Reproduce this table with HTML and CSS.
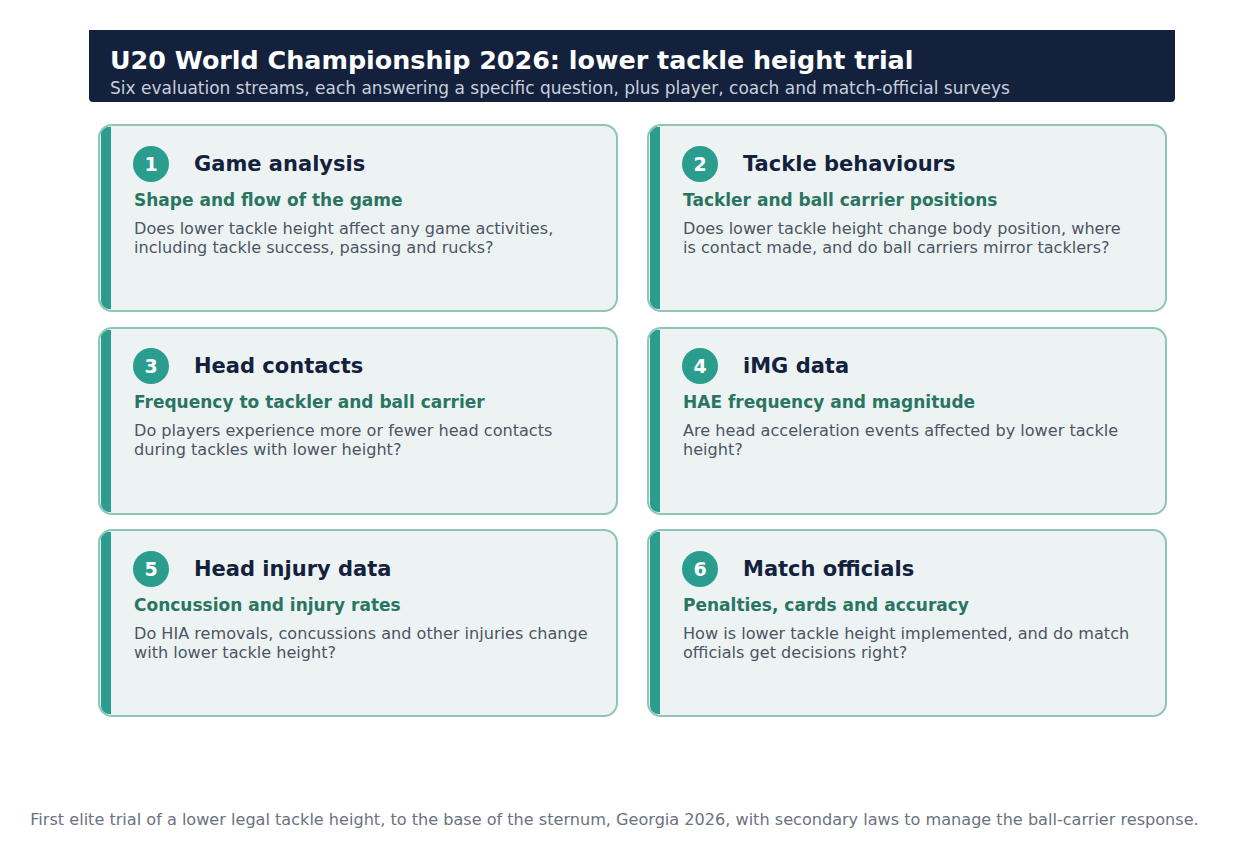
FILE: index.html
```html
<!DOCTYPE html>
<html lang="en">
<head>
<meta charset="utf-8">
<title>U20 World Championship 2026: lower tackle height trial</title>
<link rel="stylesheet" href="styles.css">
</head>
<body>
<div class="page">
  <header class="banner">
    <h1 class="banner-title">U20 World Championship 2026: lower tackle height trial</h1>
    <p class="banner-sub">Six evaluation streams, each answering a specific question, plus player, coach and match-official surveys</p>
  </header>

  <main class="grid">
    <section class="card">
      <div class="card-bar"></div>
      <div class="card-body">
        <div class="card-head"><span class="num">1</span><h2 class="card-title">Game analysis</h2></div>
        <h3 class="card-sub">Shape and flow of the game</h3>
        <p class="card-text">Does lower tackle height affect any game activities,<br>including tackle success, passing and rucks?</p>
      </div>
    </section>
    <section class="card">
      <div class="card-bar"></div>
      <div class="card-body">
        <div class="card-head"><span class="num">2</span><h2 class="card-title">Tackle behaviours</h2></div>
        <h3 class="card-sub">Tackler and ball carrier positions</h3>
        <p class="card-text">Does lower tackle height change body position, where<br>is contact made, and do ball carriers mirror tacklers?</p>
      </div>
    </section>
    <section class="card">
      <div class="card-bar"></div>
      <div class="card-body">
        <div class="card-head"><span class="num">3</span><h2 class="card-title">Head contacts</h2></div>
        <h3 class="card-sub">Frequency to tackler and ball carrier</h3>
        <p class="card-text">Do players experience more or fewer head contacts<br>during tackles with lower height?</p>
      </div>
    </section>
    <section class="card">
      <div class="card-bar"></div>
      <div class="card-body">
        <div class="card-head"><span class="num">4</span><h2 class="card-title">iMG data</h2></div>
        <h3 class="card-sub">HAE frequency and magnitude</h3>
        <p class="card-text">Are head acceleration events affected by lower tackle<br>height?</p>
      </div>
    </section>
    <section class="card">
      <div class="card-bar"></div>
      <div class="card-body">
        <div class="card-head"><span class="num">5</span><h2 class="card-title">Head injury data</h2></div>
        <h3 class="card-sub">Concussion and injury rates</h3>
        <p class="card-text">Do HIA removals, concussions and other injuries change<br>with lower tackle height?</p>
      </div>
    </section>
    <section class="card">
      <div class="card-bar"></div>
      <div class="card-body">
        <div class="card-head"><span class="num">6</span><h2 class="card-title">Match officials</h2></div>
        <h3 class="card-sub">Penalties, cards and accuracy</h3>
        <p class="card-text">How is lower tackle height implemented, and do match<br>officials get decisions right?</p>
      </div>
    </section>
  </main>

  <footer class="footnote">First elite trial of a lower legal tackle height, to the base of the sternum, Georgia 2026, with secondary laws to manage the ball-carrier response.</footer>
</div>
</body>
</html>
```

FILE: styles.css
```css
* { box-sizing: border-box; }

html, body {
  margin: 0;
  padding: 0;
  background: #ffffff;
}

body {
  font-family: "DejaVu Sans", "Liberation Sans", sans-serif;
  color: #14213d;
}

.page {
  padding-top: 30px;
  width: 1233px;
}

.banner {
  margin-left: 89px;
  width: 1086px;
  height: 72px;
  background: #14213d;
  border-radius: 0 0 4px 4px;
  padding: 15px 0 0 21px;
}

.banner-title {
  margin: 0;
  font-size: 25.4px;
  line-height: 30px;
  font-weight: bold;
  color: #ffffff;
}

.banner-sub {
  margin: 2px 0 0 0;
  font-size: 17px;
  line-height: 22px;
  color: #c7cfdb;
}

.grid {
  margin: 22px 0 0 98px;
  width: 1069px;
  display: grid;
  grid-template-columns: 520px 520px;
  grid-auto-rows: 188px;
  column-gap: 29px;
  row-gap: 14.5px;
}

.card {
  display: flex;
  background: #edf3f3;
  border: 2px solid #8fc5b9;
  border-radius: 14px;
  overflow: hidden;
}

.card-bar {
  flex: 0 0 10px;
  margin: 1px 0 1px 1px;
  background: #2a9d8f;
  border-radius: 3px 0 0 8px;
}

.card-body {
  flex: 1;
  padding: 19px 16px 0 22px;
}

.card-head {
  display: flex;
  align-items: center;
  gap: 25px;
  height: 37px;
}

.num {
  flex: 0 0 36px;
  width: 36px;
  height: 36px;
  border-radius: 50%;
  background: #2a9d8f;
  color: #ffffff;
  font-weight: bold;
  font-size: 19px;
  display: flex;
  align-items: center;
  justify-content: center;
}

.card-title {
  margin: 0;
  font-size: 21px;
  line-height: 26px;
  font-weight: bold;
  color: #14213d;
}

.card-sub {
  margin: 7.5px 0 0 1px;
  font-size: 17px;
  line-height: 20px;
  font-weight: bold;
  color: #2a7561;
}

.card-text {
  margin: 9px 0 0 1px;
  font-size: 16.1px;
  line-height: 19px;
  color: #4b5563;
  white-space: nowrap;
}

.footnote {
  margin-top: 92.5px;
  text-align: center;
  font-size: 16.1px;
  line-height: 20px;
  color: #6b7280;
  padding-right: 4px;
}
```
